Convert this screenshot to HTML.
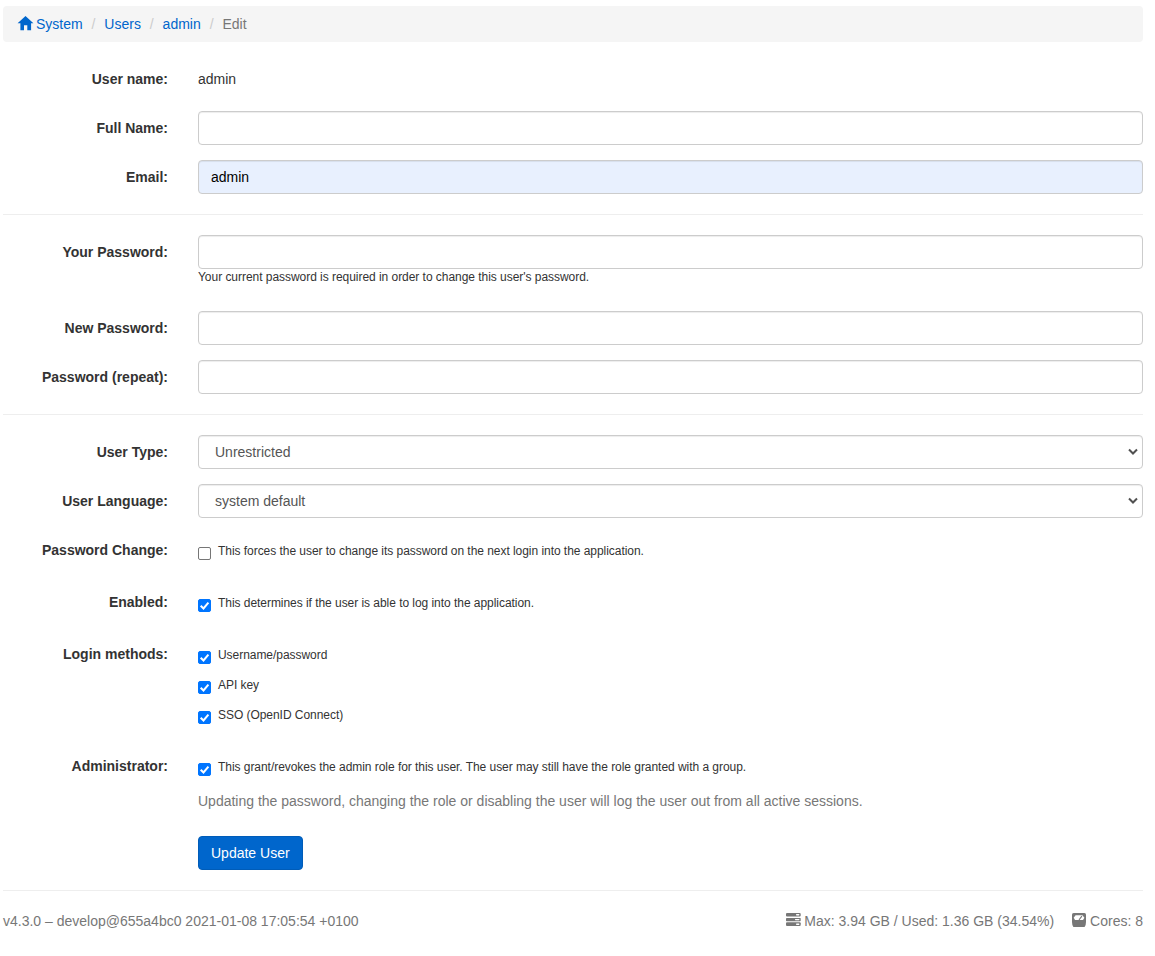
<!DOCTYPE html>
<html lang="en">
<head>
<meta charset="utf-8">
<title>Edit User</title>
<style>
*{box-sizing:border-box}
html,body{margin:0;padding:0;background:#fff}
body{width:1155px;height:956px;position:relative;overflow:hidden;font-family:"Liberation Sans",Arial,sans-serif;font-size:14px;line-height:20px;color:#333}
a{color:#0066cc;text-decoration:none}
.wrap{position:absolute;left:3px;top:0;width:1140px}
.breadcrumb{margin:6px 0 0 0;padding:8px 15px;height:36px;background:#f5f5f5;border-radius:4px;list-style:none;white-space:nowrap}
.breadcrumb li{display:inline-block}
.breadcrumb li+li:before{content:"/\00a0";padding:0 5px;color:#ccc}
.breadcrumb .active{color:#777}
.breadcrumb svg{width:15px;height:14.2px;vertical-align:-1px;margin-right:3px;overflow:visible}
form{margin:0;position:absolute;left:0;top:0;width:1140px}
.row{position:absolute;left:0;width:1140px}
.row label.l{position:absolute;left:0;top:7px;width:165px;text-align:right;font-weight:bold;margin:0}
.row .c{position:absolute;left:195px;top:0;width:945px}
.fc{display:block;width:100%;height:34px;padding:6px 12px;font:14px/20px "Liberation Sans",Arial,sans-serif;color:#555;background:#fff;border:1px solid #ccc;border-radius:4px;box-shadow:inset 0 1px 1px rgba(0,0,0,.075);outline:0;margin:0}
.fc.auto{background:#e8f0fe;color:#000}
select.fc{-webkit-appearance:none;appearance:none;padding-left:16px}
.static{padding-top:7px}
.help{letter-spacing:-0.04px;font-size:12px;line-height:17px;margin-top:0px;color:#333}
hr{position:absolute;left:0;width:1140px;margin:0;border:0;border-top:1px solid #eee;height:0}
.cb{position:absolute;left:0;width:13px;height:13px;border:1px solid #767676;border-radius:2px;background:#fff}
.cb.on{background:#0075ff;border-color:#0075ff}
.cb svg{position:absolute;left:-1px;top:-1px;width:13px;height:13px}
.cbt{position:absolute;left:20px;letter-spacing:-0.045px;font-size:12px;line-height:17px;white-space:nowrap}
.muted{color:#777}
.btn{display:inline-block;height:34px;padding:6px 12px;border:1px solid #005cb8;border-radius:4px;background:#0066cc;color:#fff;font:14px/20px "Liberation Sans",Arial,sans-serif}
.foot{position:absolute;left:0;top:911px;width:1140px;color:#777}
.foot .r{position:absolute;right:0;top:0;white-space:nowrap}
.arrow{position:absolute;right:5px;top:13.4px;width:10px;height:8px}
</style>
</head>
<body>
<div class="wrap">
<ol class="breadcrumb">
<li><a><svg viewBox="0 0 15 14.2"><path fill="#0066cc" d="M7.5 -0.1 L-0.4 7.3 H2.4 V14.2 H6 V9.2 H9.3 V14.2 H13.1 V7.3 H15.4 Z"/></svg>System</a></li> <li><a>Users</a></li> <li><a>admin</a></li> <li class="active">Edit</li>
</ol>
<form>
<div class="row" style="top:62px"><label class="l">User name:</label><div class="c static">admin</div></div>
<div class="row" style="top:111px"><label class="l">Full Name:</label><div class="c"><div class="fc"></div></div></div>
<div class="row" style="top:160px"><label class="l">Email:</label><div class="c"><div class="fc auto">admin</div></div></div>
<hr style="top:214px">
<div class="row" style="top:235px"><label class="l">Your Password:</label><div class="c"><div class="fc"></div><div class="help">Your current password is required in order to change this user's password.</div></div></div>
<div class="row" style="top:311px"><label class="l">New Password:</label><div class="c"><div class="fc"></div></div></div>
<div class="row" style="top:360px"><label class="l">Password (repeat):</label><div class="c"><div class="fc"></div></div></div>
<hr style="top:414px">
<div class="row" style="top:435px"><label class="l">User Type:</label><div class="c"><div class="fc" style="padding-left:16px">Unrestricted</div><svg class="arrow" viewBox="0 0 10 8"><path d="M1 1.5 L5 5.5 L9 1.5" fill="none" stroke="#505050" stroke-width="2"/></svg></div></div>
<div class="row" style="top:484px"><label class="l">User Language:</label><div class="c"><div class="fc" style="padding-left:16px">system default</div><svg class="arrow" viewBox="0 0 10 8"><path d="M1 1.5 L5 5.5 L9 1.5" fill="none" stroke="#505050" stroke-width="2"/></svg></div></div>
<div class="row" style="top:533px"><label class="l">Password Change:</label><div class="c"><span class="cb" style="top:14px"></span><span class="cbt" style="top:10px">This forces the user to change its password on the next login into the application.</span></div></div>
<div class="row" style="top:585px"><label class="l">Enabled:</label><div class="c"><span class="cb on" style="top:14px"><svg viewBox="0 0 13 13"><path d="M2.7 6.7 L5.5 9.5 L10.4 3.6" fill="none" stroke="#fff" stroke-width="2"/></svg></span><span class="cbt" style="top:10px">This determines if the user is able to log into the application.</span></div></div>
<div class="row" style="top:637px"><label class="l">Login methods:</label><div class="c">
<span class="cb on" style="top:14px"><svg viewBox="0 0 13 13"><path d="M2.7 6.7 L5.5 9.5 L10.4 3.6" fill="none" stroke="#fff" stroke-width="2"/></svg></span><span class="cbt" style="top:10px">Username/password</span>
<span class="cb on" style="top:44px"><svg viewBox="0 0 13 13"><path d="M2.7 6.7 L5.5 9.5 L10.4 3.6" fill="none" stroke="#fff" stroke-width="2"/></svg></span><span class="cbt" style="top:40px">API key</span>
<span class="cb on" style="top:74px"><svg viewBox="0 0 13 13"><path d="M2.7 6.7 L5.5 9.5 L10.4 3.6" fill="none" stroke="#fff" stroke-width="2"/></svg></span><span class="cbt" style="top:70px">SSO (OpenID Connect)</span>
</div></div>
<div class="row" style="top:749px"><label class="l">Administrator:</label><div class="c"><span class="cb on" style="top:14px"><svg viewBox="0 0 13 13"><path d="M2.7 6.7 L5.5 9.5 L10.4 3.6" fill="none" stroke="#fff" stroke-width="2"/></svg></span><span class="cbt" style="top:10px">This grant/revokes the admin role for this user. The user may still have the role granted with a group.</span></div></div>
<div class="row" style="top:791px"><div class="c muted" style="white-space:nowrap">Updating the password, changing the role or disabling the user will log the user out from all active sessions.</div></div>
<div class="row" style="top:836px"><div class="c"><span class="btn">Update User</span></div></div>
<hr style="top:890px">
<div class="foot"><span>v4.3.0 – develop@655a4bc0 2021-01-08 17:05:54 +0100</span>
<span class="r"><svg width="14.7" height="13" viewBox="0 0 14.8 13" preserveAspectRatio="none" style="vertical-align:0px;margin-right:3.2px"><g fill="#777"><rect x="0" y="0" width="14.8" height="3.5" rx="1"/><rect x="0" y="4.9" width="14.8" height="3.3" rx="0.7"/><rect x="0" y="9.3" width="14.8" height="3.7" rx="1"/></g><g fill="#fff"><rect x="10.1" y="1" width="3.4" height="1.4" rx="0.6"/><rect x="9" y="5.9" width="4.6" height="1.3" rx="0.6"/><rect x="10.1" y="10.5" width="3.4" height="1.4" rx="0.6"/></g></svg>Max: 3.94 GB / Used: 1.36 GB (34.54%)<svg width="14" height="14" viewBox="0 0 14 14" style="vertical-align:-1px;margin:0 4px 0 18px"><path d="M1.6 0 H12.4 Q14 0 14 1.6 V9 Q14 12 12.6 14 H1.4 Q0 12 0 9 V1.6 Q0 0 1.6 0 Z" fill="#777"/><path d="M1.7 4.7 L3.6 2.2 H10.4 L12.4 4.7 L11 7 H3 Z" fill="#fff"/><path d="M7 6.8 L9.9 3.1" stroke="#777" stroke-width="1.1"/></svg>Cores: 8</span></div>
</form>
</div>
</body>
</html>
